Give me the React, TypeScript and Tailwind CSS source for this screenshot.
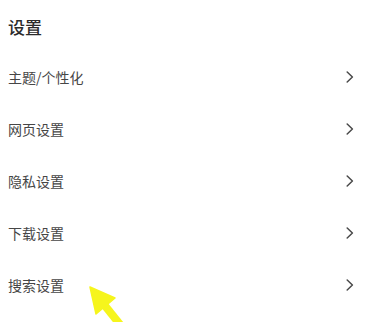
import React from "react";

const items = ["主题/个性化", "网页设置", "隐私设置", "下载设置", "搜索设置"];

function Chevron() {
  return (
    <svg width="8" height="12" viewBox="0 0 8 12" fill="none">
      <path d="M1.2 1 L6.4 6 L1.2 11" stroke="#4a4a4a" strokeWidth="1.5" strokeLinecap="round" strokeLinejoin="round" />
    </svg>
  );
}

export default function App() {
  return (
    <div
      className="relative w-[366px] h-[322px] overflow-hidden bg-white"
      style={{ fontFamily: '"Noto Sans CJK SC", "Noto Sans", sans-serif' }}
    >
      <div className="pt-[17px] pb-[14px] pl-[8px] text-[17px] leading-[20px] font-medium text-[#2b2b2b]">设置</div>
      <div className="flex flex-col">
        {items.map((t) => (
          <div key={t} className="h-[52px] flex items-center justify-between pl-[8px] pr-[12px]">
            <span className="text-[14px] leading-[20px] text-[#464646]">{t}</span>
            <Chevron />
          </div>
        ))}
      </div>
      <svg className="absolute left-[88px] top-[285px]" width="40" height="37" viewBox="0 0 40 37">
        <line x1="14" y1="17" x2="34" y2="42" stroke="#f6f51c" strokeWidth="8" />
        <polygon points="2,2 27,13 8,29" fill="#f6f51c" stroke="#f6f51c" strokeWidth="1.5" strokeLinejoin="round" />
      </svg>
    </div>
  );
}
